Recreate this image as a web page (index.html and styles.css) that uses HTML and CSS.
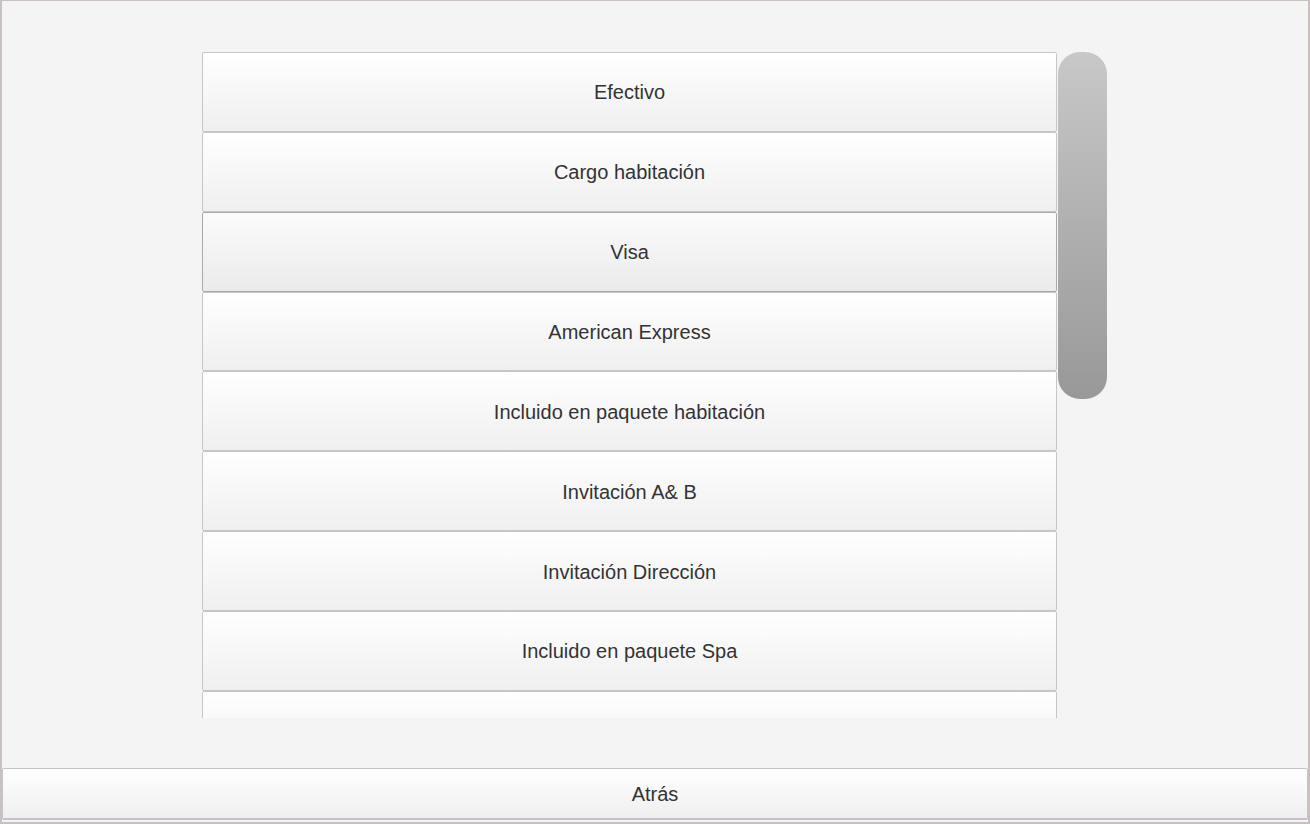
FILE: index.html
```html
<!DOCTYPE html>
<html lang="es">
<head>
<meta charset="utf-8">
<title>Formas de pago</title>
<link rel="stylesheet" href="styles.css">
</head>
<body>
<div class="frame">
  <div class="content">
    <div class="list">
      <div class="row">Efectivo</div>
      <div class="row">Cargo habitación</div>
      <div class="row row-dark">Visa</div>
      <div class="row">American Express</div>
      <div class="row">Incluido en paquete habitación</div>
      <div class="row">Invitación A&amp; B</div>
      <div class="row">Invitación Dirección</div>
      <div class="row">Incluido en paquete Spa</div>
      <div class="row"></div>
    </div>
    <div class="scroll-thumb"></div>
  </div>
  <div class="footer">
    <button class="back">Atrás</button>
  </div>
</div>
</body>
</html>
```
FILE: styles.css
```css
html, body {
  margin: 0;
  padding: 0;
}
body {
  font-family: "Liberation Sans", Arial, sans-serif;
  color: #333333;
}
.frame {
  width: 1310px;
  height: 824px;
  box-sizing: border-box;
  border-style: solid;
  border-color: #c9c0c0;
  border-width: 1px 2px 2px 2px;
  background: #f4f4f4;
  display: flex;
  flex-direction: column;
}
.content {
  flex: 1;
  display: flex;
  align-items: flex-start;
  padding: 51px 0 0 200px;
  gap: 1px;
}
.list {
  width: 855px;
  height: 666px;
  overflow: hidden;
  display: flex;
  flex-direction: column;
}
.row {
  flex: 0 0 79.86px;
  box-sizing: border-box;
  border: 1px solid #c6c6c6;
  border-radius: 2px;
  padding-top: 2px;
  background: linear-gradient(to bottom, #ffffff 0%, #efefef 100%);
  display: flex;
  align-items: center;
  justify-content: center;
  font-size: 20px;
  color: #333333;
}
.row-dark {
  border-color: #a9a9a9;
  background: linear-gradient(to bottom, #fbfbfb 0%, #ebebeb 100%);
}
.scroll-thumb {
  width: 49px;
  height: 347px;
  border-radius: 22px;
  background: linear-gradient(to bottom, #c8c8c8 0%, #989898 100%);
}
.footer {
  padding: 0 0 2px 0;
}
.back {
  display: block;
  width: 100%;
  height: 52px;
  box-sizing: border-box;
  border: 1px solid #c4c4c4;
  border-bottom-width: 2px;
  border-radius: 2px;
  padding: 2px 0 0 0;
  background: linear-gradient(to bottom, #ffffff 0%, #efefef 100%);
  font-family: "Liberation Sans", Arial, sans-serif;
  font-size: 20px;
  color: #333333;
}
```
